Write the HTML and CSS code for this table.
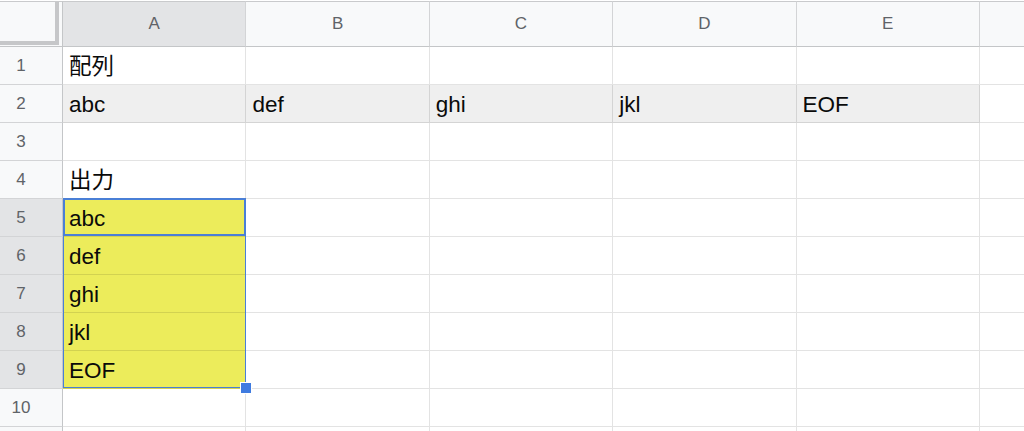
FILE: index.html
```html
<!DOCTYPE html>
<html lang="ja">
<head>
<meta charset="utf-8">
<title>Sheet</title>
<link rel="stylesheet" href="styles.css">
</head>
<body>
<div class="sheet">
  <div class="corner"><div class="corner-bars"></div></div>
  <div class="ch sel">A</div>
  <div class="ch">B</div>
  <div class="ch">C</div>
  <div class="ch">D</div>
  <div class="ch">E</div>
  <div class="ch last"></div>

  <div class="rh">1</div>
  <div class="c">配列</div>
  <div class="c"></div>
  <div class="c"></div>
  <div class="c"></div>
  <div class="c"></div>
  <div class="c last"></div>

  <div class="rh">2</div>
  <div class="c gray">abc</div>
  <div class="c gray">def</div>
  <div class="c gray">ghi</div>
  <div class="c gray">jkl</div>
  <div class="c gray">EOF</div>
  <div class="c last"></div>

  <div class="rh">3</div>
  <div class="c"></div>
  <div class="c"></div>
  <div class="c"></div>
  <div class="c"></div>
  <div class="c"></div>
  <div class="c last"></div>

  <div class="rh">4</div>
  <div class="c">出力</div>
  <div class="c"></div>
  <div class="c"></div>
  <div class="c"></div>
  <div class="c"></div>
  <div class="c last"></div>

  <div class="rh sel">5</div>
  <div class="c yel">abc</div>
  <div class="c"></div>
  <div class="c"></div>
  <div class="c"></div>
  <div class="c"></div>
  <div class="c last"></div>

  <div class="rh sel">6</div>
  <div class="c yel">def</div>
  <div class="c"></div>
  <div class="c"></div>
  <div class="c"></div>
  <div class="c"></div>
  <div class="c last"></div>

  <div class="rh sel">7</div>
  <div class="c yel">ghi</div>
  <div class="c"></div>
  <div class="c"></div>
  <div class="c"></div>
  <div class="c"></div>
  <div class="c last"></div>

  <div class="rh sel">8</div>
  <div class="c yel">jkl</div>
  <div class="c"></div>
  <div class="c"></div>
  <div class="c"></div>
  <div class="c"></div>
  <div class="c last"></div>

  <div class="rh sel">9</div>
  <div class="c yel">EOF</div>
  <div class="c"></div>
  <div class="c"></div>
  <div class="c"></div>
  <div class="c"></div>
  <div class="c last"></div>

  <div class="rh">10</div>
  <div class="c"></div>
  <div class="c"></div>
  <div class="c"></div>
  <div class="c"></div>
  <div class="c"></div>
  <div class="c last"></div>

  <div class="rh"></div>
  <div class="c"></div>
  <div class="c"></div>
  <div class="c"></div>
  <div class="c"></div>
  <div class="c"></div>
  <div class="c last"></div>

  <div class="range"><div class="handle"></div></div>
  <div class="active"></div>
</div>
</body>
</html>
```

FILE: styles.css
```css
html, body {
  margin: 0;
  padding: 0;
  overflow: hidden;
  background: #ffffff;
}

.sheet {
  margin-top: 1px;
  display: grid;
  grid-template-columns: 63px repeat(5, 183.4px) 1fr;
  grid-template-rows: 46px repeat(11, 38px);
  position: relative;
  font-family: "Liberation Sans", "Noto Sans CJK JP", sans-serif;
}

.corner {
  box-sizing: border-box;
  background: #f8f9fa;
  border-top: 1px solid #c9cacc;
  border-right: 1px solid #c4c6c8;
  border-bottom: 1px solid #c4c6c8;
}

.corner-bars {
  box-sizing: border-box;
  width: 59px;
  height: 43px;
  border-right: 4px solid #c6c7c9;
  border-bottom: 4px solid #c6c7c9;
}

.ch {
  box-sizing: border-box;
  background: #f8f9fa;
  border-top: 1px solid #c9cacc;
  border-right: 1px solid #d3d4d6;
  border-bottom: 1px solid #c4c6c8;
  display: flex;
  align-items: center;
  justify-content: center;
  font-size: 17px;
  color: #5f6368;
  padding-bottom: 1px;
}

.ch.sel {
  background: #e3e4e6;
}

.ch.last {
  border-right: none;
}

.rh {
  box-sizing: border-box;
  background: #f8f9fa;
  border-right: 1px solid #c4c6c8;
  border-bottom: 1px solid #d3d4d6;
  display: flex;
  align-items: center;
  justify-content: center;
  padding-right: 20px;
  font-size: 17px;
  color: #5f6368;
}

.rh.sel {
  background: #e3e4e6;
}

.c {
  box-sizing: border-box;
  border-right: 1px solid rgba(0, 0, 0, 0.11);
  border-bottom: 1px solid rgba(0, 0, 0, 0.11);
  display: flex;
  align-items: flex-end;
  padding: 0 0 5px 6px;
  font-size: 22.5px;
  line-height: 24px;
  color: #0a0a0a;
  white-space: nowrap;
  overflow: hidden;
}

.c.last {
  border-right: none;
}

.c.gray {
  background: #efefef;
}

.c.yel {
  background: #ecec5b;
}

.range {
  position: absolute;
  grid-column: 2 / 3;
  grid-row: 6 / 11;
  top: 0;
  left: 0;
  right: 0;
  bottom: 1px;
  border: 1px solid #4a7fd6;
  pointer-events: none;
}

.handle {
  position: absolute;
  right: -7px;
  bottom: -7px;
  width: 10px;
  height: 10px;
  background: #3f7be0;
  border: 1px solid #ffffff;
}

.active {
  position: absolute;
  grid-column: 2 / 3;
  grid-row: 6 / 7;
  top: -1px;
  left: 0;
  right: 0;
  bottom: 1px;
  border: 2px solid #4a7fd6;
  pointer-events: none;
}
```
